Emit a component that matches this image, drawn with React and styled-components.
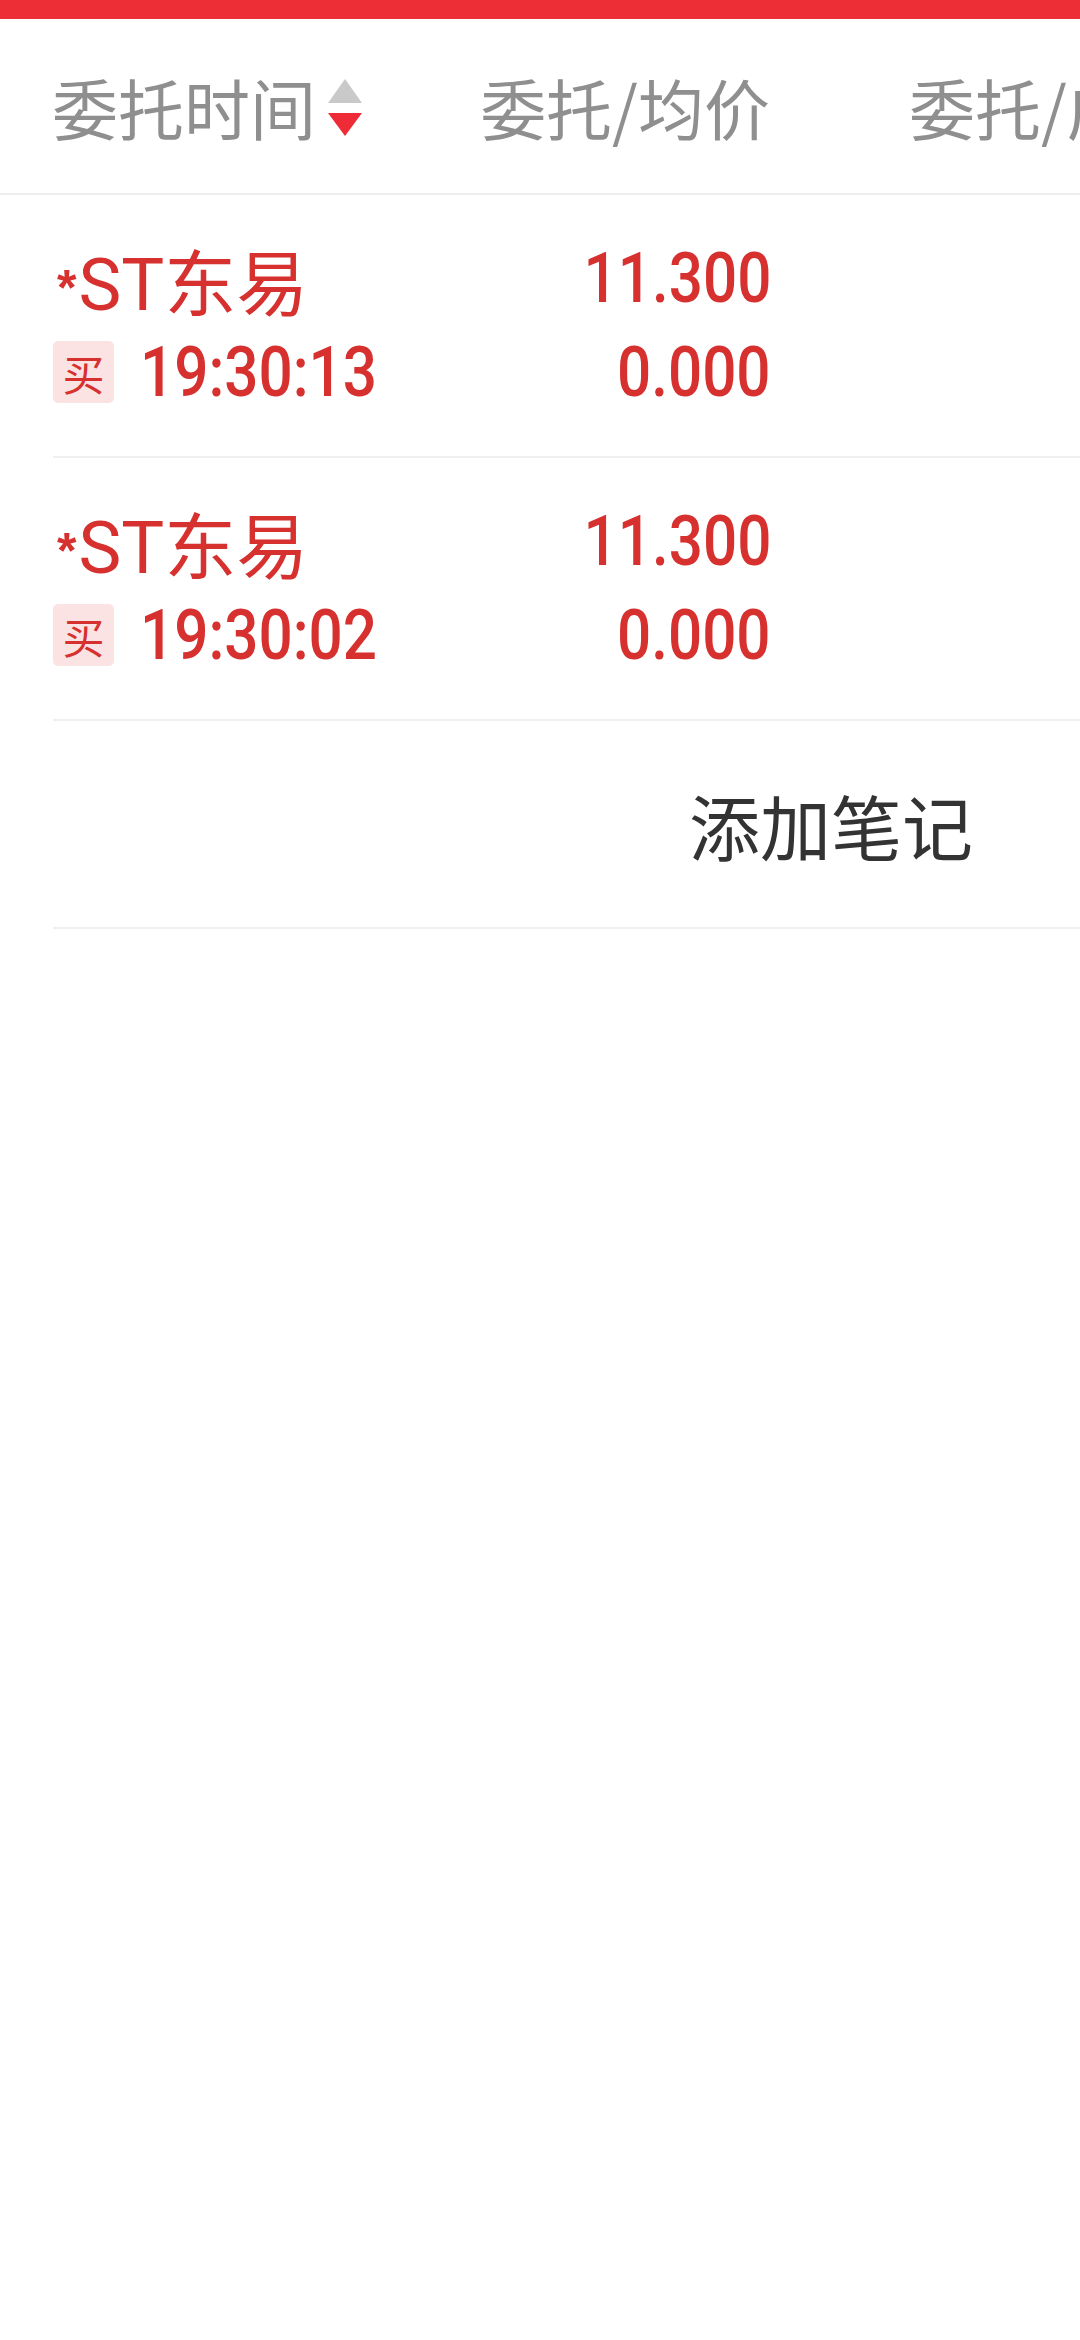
import React from 'react';
import styled, { createGlobalStyle } from 'styled-components';

const orders = [
  { name: 'ST东易', side: '买', time: '19:30:13', price: '11.300', avg: '0.000' },
  { name: 'ST东易', side: '买', time: '19:30:02', price: '11.300', avg: '0.000' },
];

function SortIcon() {
  return (
    <SortSvg width="34" height="58" viewBox="0 0 34 58">
      <polygon points="17,0 34,24 0,24" fill="#c9c9c9" />
      <polygon points="0,34 34,34 17,57" fill="#ee2b36" />
    </SortSvg>
  );
}

export default function App() {
  return (
    <Page>
      <GlobalStyle />
      <TopBar />
      <HeaderRow>
        <HeadCell>
          委托时间
          <SortIcon />
        </HeadCell>
        <HeadCell $align="right">委托/均价</HeadCell>
        <HeadCell $pad={139}>委托/成交</HeadCell>
      </HeaderRow>

      <List>
        {orders.map((o, i) => (
          <Row key={i}>
            <Name>
              <Star>*</Star>
              {o.name}
            </Name>
            <NumCell>
              <Digits $origin="right">{o.price}</Digits>
            </NumCell>
            <Col3 />
            <TimeCell>
              <Badge>{o.side}</Badge>
              <Digits $origin="left">{o.time}</Digits>
            </TimeCell>
            <NumCell>
              <Digits $origin="right">{o.avg}</Digits>
            </NumCell>
            <Col3 />
          </Row>
        ))}
        <NoteRow>添加笔记</NoteRow>
      </List>
    </Page>
  );
}

const GlobalStyle = createGlobalStyle`
  html, body {
    margin: 0;
    padding: 0;
    background: #ffffff;
  }
  body {
    font-family: "Noto Sans CJK SC", "Noto Sans", sans-serif;
  }
`;

const Page = styled.div`
  width: 1080px;
  min-height: 2340px;
  background: #ffffff;
  overflow: hidden;
`;

const TopBar = styled.div`
  height: 19px;
  background: #ee2e36;
`;

const HeaderRow = styled.div`
  display: grid;
  grid-template-columns: 418px 300px 1fr;
  align-items: center;
  height: 174px;
  padding-left: 52px;
  border-bottom: 2px solid #eeeeee;
`;

const HeadCell = styled.div`
  display: flex;
  align-items: center;
  justify-content: ${(p) => (p.$align === 'right' ? 'flex-end' : 'flex-start')};
  padding-left: ${(p) => p.$pad || 0}px;
  font-family: "Noto Sans CJK SC", sans-serif;
  font-size: 66px;
  color: #8f8f8f;
  white-space: nowrap;
  overflow: hidden;
`;

const SortSvg = styled.svg`
  margin-left: 12px;
  margin-top: 4px;
  flex-shrink: 0;
`;

const List = styled.div`
  padding-left: 53px;
`;

const Row = styled.div`
  display: grid;
  grid-template-columns: 418px 300px 1fr;
  grid-template-rows: 86px 62px;
  row-gap: 20px;
  box-sizing: border-box;
  height: 263px;
  padding-top: 40px;
  border-bottom: 2px solid #efefef;
  color: #d6302f;
`;

const Name = styled.div`
  display: flex;
  align-items: center;
  font-family: "Roboto", "Noto Sans CJK SC", sans-serif;
  font-size: 72px;
  font-weight: 400;
  white-space: nowrap;
`;

const Star = styled.span`
  font-family: "Liberation Sans", sans-serif;
  font-weight: 700;
  font-size: 50px;
  margin: 0 2px 0 4px;
  position: relative;
  top: 10px;
`;

const NumCell = styled.div`
  display: flex;
  align-items: center;
  justify-content: flex-end;
`;

const Digits = styled.span`
  display: inline-block;
  font-family: "Roboto", sans-serif;
  font-size: 70px;
  font-weight: 500;
  line-height: 1;
  transform: scaleX(0.86);
  transform-origin: ${(p) => p.$origin} center;
  white-space: nowrap;
`;

const Col3 = styled.div``;

const TimeCell = styled.div`
  display: flex;
  align-items: center;
`;

const Badge = styled.span`
  display: flex;
  align-items: center;
  justify-content: center;
  width: 61px;
  height: 62px;
  border-radius: 5px;
  background: #fbe3e3;
  color: #d6302f;
  font-family: "Noto Sans CJK SC", sans-serif;
  font-size: 42px;
  margin-right: 26px;
`;

const NoteRow = styled.div`
  display: flex;
  align-items: center;
  box-sizing: border-box;
  height: 208px;
  padding-left: 636px;
  border-bottom: 2px solid #efefef;
  font-family: "Noto Sans CJK SC", sans-serif;
  font-size: 71px;
  color: #333333;
`;
